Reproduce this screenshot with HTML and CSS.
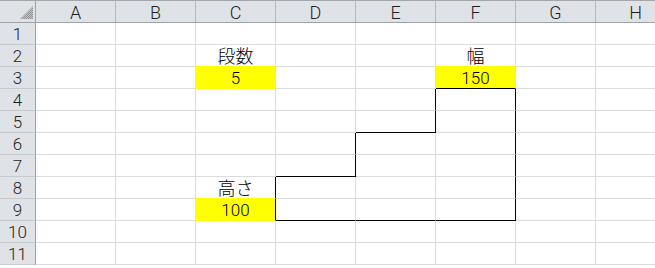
FILE: index.html
```html
<!DOCTYPE html>
<html>
<head>
<meta charset="utf-8">
<link rel="stylesheet" href="styles.css">
</head>
<body>
<div class="sheet">
  <div class="corner"><svg width="13" height="13" viewBox="0 0 13 13"><defs><pattern id="chk" width="2" height="2" patternUnits="userSpaceOnUse"><rect width="1" height="1" fill="#8f8f8f"/><rect x="1" y="1" width="1" height="1" fill="#8f8f8f"/><rect x="1" width="1" height="1" fill="#c4c6c9"/><rect y="1" width="1" height="1" fill="#c4c6c9"/></pattern></defs><polygon points="13,0 13,13 0,13" fill="url(#chk)"/></svg></div>
  <div class="ch">A</div><div class="ch">B</div><div class="ch">C</div><div class="ch">D</div><div class="ch">E</div><div class="ch">F</div><div class="ch">G</div><div class="ch">H</div>

  <div class="rh">1</div><div class="c"></div><div class="c"></div><div class="c"></div><div class="c"></div><div class="c"></div><div class="c"></div><div class="c"></div><div class="c"></div>

  <div class="rh">2</div><div class="c"></div><div class="c"></div><div class="c jp yb">段数</div><div class="c"></div><div class="c"></div><div class="c jp yb">幅</div><div class="c"></div><div class="c"></div>

  <div class="rh">3</div><div class="c"></div><div class="c yl"></div><div class="c num y">5</div><div class="c"></div><div class="c"></div><div class="c num y bb">150</div><div class="c"></div><div class="c"></div>

  <div class="rh">4</div><div class="c"></div><div class="c"></div><div class="c"></div><div class="c"></div><div class="c br"></div><div class="c br"></div><div class="c"></div><div class="c"></div>

  <div class="rh">5</div><div class="c"></div><div class="c"></div><div class="c"></div><div class="c"></div><div class="c br bb"></div><div class="c br"></div><div class="c"></div><div class="c"></div>

  <div class="rh">6</div><div class="c"></div><div class="c"></div><div class="c"></div><div class="c br"></div><div class="c"></div><div class="c br"></div><div class="c"></div><div class="c"></div>

  <div class="rh">7</div><div class="c"></div><div class="c"></div><div class="c"></div><div class="c br bb"></div><div class="c"></div><div class="c br"></div><div class="c"></div><div class="c"></div>

  <div class="rh">8</div><div class="c"></div><div class="c"></div><div class="c jp yb br">高さ</div><div class="c"></div><div class="c"></div><div class="c br"></div><div class="c"></div><div class="c"></div>

  <div class="rh">9</div><div class="c"></div><div class="c yl"></div><div class="c num y br">100</div><div class="c bb"></div><div class="c bb"></div><div class="c bb br"></div><div class="c"></div><div class="c"></div>

  <div class="rh">10</div><div class="c"></div><div class="c"></div><div class="c"></div><div class="c"></div><div class="c"></div><div class="c"></div><div class="c"></div><div class="c"></div>

  <div class="rh">11</div><div class="c"></div><div class="c"></div><div class="c"></div><div class="c"></div><div class="c"></div><div class="c"></div><div class="c"></div><div class="c"></div>
</div>
</body>
</html>
```

FILE: styles.css
```css
html, body {
  margin: 0;
  padding: 0;
  background: #ffffff;
}

.sheet {
  width: 655px;
  height: 268px;
  overflow: hidden;
  display: grid;
  grid-template-columns: 36px repeat(8, 80px);
  grid-template-rows: 23px repeat(11, 22px);
  font-family: "Roboto", "Liberation Sans", Arial, sans-serif;
  font-weight: 300;
  color: #000;
}

.sheet > div {
  box-sizing: border-box;
  min-width: 0;
}

.corner {
  background: #dfe3e8;
  border-top: 1px solid #a3a6aa;
  border-right: 1px solid #9ea2a7;
  border-bottom: 1px solid #9ea2a7;
  display: flex;
  justify-content: flex-end;
  align-items: flex-end;
  padding: 0 2px 3px 0;
}

.corner svg {
  display: block;
}

.ch {
  background: #dfe3e8;
  border-top: 1px solid #a3a6aa;
  border-bottom: 1px solid #9ea2a7;
  border-right: 1px solid #b6bac0;
  font-size: 18px;
  line-height: 21px;
  text-align: center;
  color: #1e1e1e;
  padding-top: 1px;
}

.rh {
  background: #dfe3e8;
  border-right: 1px solid #9ea2a7;
  border-bottom: 1px solid #c6cacf;
  font-size: 17px;
  line-height: 21px;
  text-align: center;
  color: #1e1e1e;
  padding-top: 1px;
}

.c {
  border-right: 1px solid #dadcdd;
  border-bottom: 1px solid #dadcdd;
  text-align: center;
  line-height: 21px;
  white-space: nowrap;
}

.num {
  font-size: 17px;
  padding-top: 1px;
}

.jp {
  font-family: "Noto Sans CJK JP", sans-serif;
  font-size: 18px;
  font-weight: 300;
}

.y {
  background: #ffff00;
  border-right-color: #ffff00;
  border-bottom-color: #ffff00;
}

.yb {
  border-bottom-color: #ffff00;
}

.yl {
  border-right-color: #ffff00;
}

.br {
  border-right-color: #000000;
}

.bb {
  border-bottom-color: #000000;
}
```
